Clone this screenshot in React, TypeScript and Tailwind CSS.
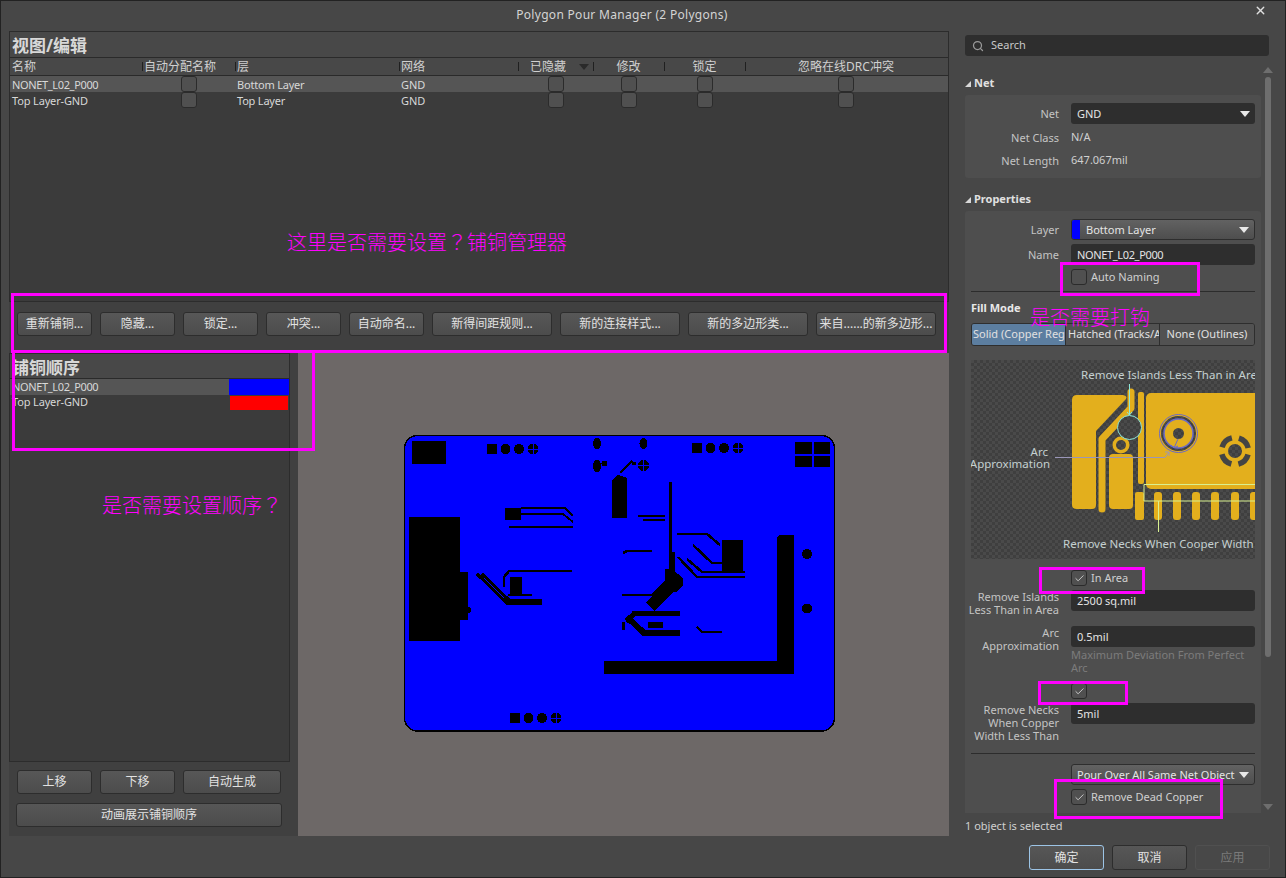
import { Check, Search, X } from 'lucide-react';
import type { ReactNode } from 'react';

const Caret = ({ className = '' }: { className?: string }) => (
  <svg width="10" height="6" viewBox="0 0 10 6" className={className}>
    <path d="M0 0H10L5 6Z" fill="currentColor" />
  </svg>
);

const Box = ({ checked }: { checked?: boolean }) => (
  <span className="flex h-[16px] w-[16px] shrink-0 items-center justify-center rounded-[3px] border border-[#2b2b2b] bg-[#505050] text-[#d0d0d0]">
    {checked && <Check size={11} strokeWidth={2} />}
  </span>
);

const Btn = ({ children, className = '' }: { children: ReactNode; className?: string }) => (
  <button className={`flex h-[24px] shrink-0 items-center justify-center whitespace-nowrap rounded-[3px] border border-[#2d2d2d] bg-gradient-to-b from-[#575757] to-[#4c4c4c] text-[12px] text-[#e2e2e2] ${className}`}>
    {children}
  </button>
);

const columns = 'grid grid-cols-[132px_93px_164px_119px_75px_71px_81px_202px]';

const GridHeadCell = ({ children, center, first }: { children?: ReactNode; center?: boolean; first?: boolean }) => (
  <div className={`relative flex h-full items-center px-[2px] ${center ? 'justify-center' : ''}`}>
    {!first && <span className="absolute left-0 top-[4px] h-[9px] w-px bg-[#202020]" />}
    {children}
  </div>
);

const rows = [
  { name: 'NONET_L02_P000', layer: 'Bottom Layer', selected: true },
  { name: 'Top Layer-GND', layer: 'Top Layer', selected: false },
];

const Cell = ({ children }: { children: ReactNode }) => <div className="flex items-center justify-center">{children}</div>;

const PolygonGrid = () => (
  <div className="h-[271px] shrink-0 border border-[#2c2c2c] bg-[#3b3b3b]">
    <div className="flex h-[26px] items-center border-b border-[#2a2a2a] bg-[#484848] px-[2px] pt-[2px] text-[17px] font-bold leading-none text-[#d8d8d8]">视图/编辑</div>
    <div className={`${columns} h-[18px] border-b border-[#2a2a2a] bg-[#484848] text-[12px] text-[#d0d0d0]`}>
      <GridHeadCell first>名称</GridHeadCell>
      <GridHeadCell>自动分配名称</GridHeadCell>
      <GridHeadCell>层</GridHeadCell>
      <GridHeadCell>网络</GridHeadCell>
      <GridHeadCell center>
        <span className="ml-[-15px]">已隐藏</span>
        <Caret className="absolute right-[4px] top-[6px] text-[#2a2a2a]" />
      </GridHeadCell>
      <GridHeadCell center>修改</GridHeadCell>
      <GridHeadCell center>锁定</GridHeadCell>
      <GridHeadCell center>忽略在线DRC冲突</GridHeadCell>
    </div>
    {rows.map(r => (
      <div key={r.name} className={`${columns} h-[16px] text-[11px] leading-none text-[#d8d8d8] ${r.selected ? 'bg-[#555555]' : ''}`}>
        <div className={`flex items-center px-[2px] ${r.selected ? 'tracking-[-0.35px]' : 'tracking-[-0.15px]'}`}>{r.name}</div>
        <Cell><Box /></Cell>
        <div className="flex items-center px-[2px] tracking-[-0.2px]">{r.layer}</div>
        <div className="flex items-center px-[2px]">GND</div>
        <Cell><Box /></Cell>
        <Cell><Box /></Cell>
        <Cell><Box /></Cell>
        <Cell><Box /></Cell>
      </div>
    ))}
  </div>
);

const CrossPad = ({ x, y }: { x: number; y: number }) => (
  <g>
    <circle cx={x} cy={y} r={5.5} fill="#000" />
    <path d={`M${x - 6} ${y}H${x + 6}M${x} ${y - 6}V${y + 6}`} stroke="#0000ff" strokeWidth="1" />
  </g>
);

const PadRow = ({ x, y }: { x: number; y: number }) => (
  <g fill="#000">
    <rect x={x} y={y} width="10" height="10" />
    <circle cx={x + 18.5} cy={y + 5} r="5" />
    <circle cx={x + 32} cy={y + 5} r="5" />
    <CrossPad x={x + 46} y={y + 5} />
  </g>
);

const tracks: [string, number][] = [
  ['M521 508H565L573 516', 2],
  ['M521 514H563L573 522', 2],
  ['M509 527H573', 2.5],
  ['M477 574L507 603H542', 3],
  ['M482 574L509 600H542', 3],
  ['M504 587V577L509 571H572', 2.5],
  ['M508 595H532', 2],
  ['M620 473L632 461', 2],
  ['M632 463H636', 3],
  ['M670 482V570', 3],
  ['M672 552V582', 6],
  ['M675 582L650 607', 12],
  ['M638 516H665', 2],
  ['M643 520H665', 2],
  ['M677 534H707L720 545', 2.5],
  ['M693 545L712 563H722', 2.5],
  ['M678 557L697 577H745', 2.5],
  ['M687 559L702 572H745', 2.5],
  ['M623 553L627 551H652', 2.5],
  ['M622 595H652L665 582', 2],
  ['M632 613.5H680', 5],
  ['M628 618L644 633H680', 6],
  ['M635 613L626 621', 5],
  ['M648 625H663', 6],
  ['M623 622V630', 3],
  ['M697 627L702 632H722', 2],
];

const BoardView = () => (
  <svg width="440" height="310" viewBox="400 425 440 310" className="block" shapeRendering="crispEdges">
    <rect x="404.5" y="435.5" width="430" height="295.5" rx="13" fill="#0000ff" stroke="#000" strokeWidth="1.5" />
    <g fill="#000">
      <rect x="412" y="441" width="34" height="23" />
      <rect x="409" y="517" width="51" height="124" />
      <rect x="460" y="572" width="8" height="48" />
      <rect x="505" y="508" width="16" height="12" />
      <rect x="510" y="577" width="12" height="17" />
      <path d="M612 518V480L618 475L627 478V518Z" />
      <rect x="722" y="540" width="21" height="32" />
      <path d="M604 661H777V537L780 535H794V674H604Z" />
      <path d="M665 569H672L683 578V585L676 592H666L665 585Z" />
      <path d="M795 442H812V454H795ZM813.5 442H830V454H813.5ZM795 455.5H812V467H795ZM813.5 455.5H830V467H813.5Z" />
      <ellipse cx="597" cy="443.5" rx="4" ry="5.5" />
      <ellipse cx="597" cy="466" rx="4" ry="6" />
      <circle cx="604.5" cy="463.5" r="3" />
      <ellipse cx="643.5" cy="443.5" rx="4" ry="5.5" />
      <circle cx="807" cy="554" r="5" />
      <circle cx="807" cy="608.5" r="5" />
      <circle cx="468" cy="610" r="3" />
    </g>
    <PadRow x={487} y={444} />
    <PadRow x={692} y={443} />
    <PadRow x={510} y={713} />
    <CrossPad x={643.5} y={465.5} />
    <g fill="none" stroke="#000">
      {tracks.map(([d, w]) => <path key={d} d={d} strokeWidth={w} />)}
    </g>
  </svg>
);

const Illustration = () => (
  <div className="h-[199px] w-[284px] shrink-0 bg-[repeating-conic-gradient(#3f3f3f_0_25%,#4a4a4a_0_50%)] bg-[length:6px_6px]">
    <svg width="284" height="199" viewBox="971 360 284 199" className="block">
      <defs>
        <pattern id="chk" x="971" y="360" width="6" height="6" patternUnits="userSpaceOnUse">
          <rect width="6" height="6" fill="#4a4a4a" />
          <rect width="3" height="3" fill="#3f3f3f" />
          <rect x="3" y="3" width="3" height="3" fill="#3f3f3f" />
        </pattern>
      </defs>
      <g fill="#e3af1d">
        <path d="M1072 400Q1072 395 1077 395H1123Q1128 396 1126 399L1096 431V505Q1096 509 1092 509H1077Q1072 509 1072 505Z" />
        <path d="M1102 509V439L1131 408V392" fill="none" stroke="#e3af1d" strokeWidth="7" strokeLinecap="round" strokeLinejoin="round" />
        <path d="M1109 458Q1109 454 1113 454H1129Q1133 454 1133 458V505Q1133 509 1129 509H1113Q1109 509 1109 505Z" />
        <rect x="1138" y="392" width="6" height="92" rx="2" />
        <rect x="1135" y="492" width="9" height="28" rx="2" />
        <rect x="1146" y="393" width="120" height="96" rx="5" />
        <circle cx="1121" cy="445" r="8.5" />
        {[1154, 1173, 1192, 1211, 1231, 1250].map(x => <rect key={x} x={x} y="492" width="8" height="28" rx="3" />)}
      </g>
      <circle cx="1121" cy="445" r="5" fill="url(#chk)" />
      <circle cx="1178.5" cy="433.5" r="19" fill="#e3af1d" stroke="#6a6ac8" strokeWidth="1" />
      <circle cx="1178.5" cy="433.5" r="17.5" fill="url(#chk)" />
      <circle cx="1178.5" cy="433.5" r="14.5" fill="#e3af1d" stroke="#6a6ac8" strokeWidth="1.5" />
      <circle cx="1178.5" cy="433.5" r="5.5" fill="url(#chk)" />
      <path d="M1178 439L1174 448M1171 445L1174 448L1178 446" fill="none" stroke="#6a6ac8" strokeWidth="1" />
      <circle cx="1235" cy="451" r="13.5" fill="none" stroke="#444" strokeWidth="5.5" strokeDasharray="14 7.2" strokeDashoffset="-3.6" />
      <circle cx="1235" cy="451" r="7" fill="url(#chk)" />
      <circle cx="1129.5" cy="427.5" r="12" fill="url(#chk)" stroke="#8ee8d8" strokeWidth="1" />
      <path d="M1129.5 384V415M1127 412L1129.5 415L1132 412" fill="none" stroke="#8ee8d8" strokeWidth="1" />
      <path d="M1055 457.5H1165L1169 452M1165 452H1169V456" fill="none" stroke="#9a96b8" strokeWidth="1" />
      <path d="M1255 484.5H1144V501H1255M1158.5 501V532" fill="none" stroke="#d8f090" strokeWidth="1" />
      <g fill="#c4d0d0" fontSize="11.5">
        <text x="1081" y="379">Remove Islands Less Than in Area</text>
        <text x="1048" y="456" textAnchor="end">Arc</text>
        <text x="1050" y="468" textAnchor="end">Approximation</text>
        <text x="1063" y="548">Remove Necks When Cooper Width</text>
      </g>
    </svg>
  </div>
);

const Label = ({ children }: { children: ReactNode }) => (
  <div className="w-[94px] shrink-0 text-right text-[11px] leading-[13px] text-[#c4c4c4]">{children}</div>
);

const Input = ({ value, className = '' }: { value: string; className?: string }) => (
  <div className={`flex h-[21px] w-[184px] items-center rounded-[3px] bg-[#2e2e2e] px-[6px] pt-[1px] text-[11px] text-[#e4e4e4] ${className}`}>{value}</div>
);

const TallRow = ({ label, children, className = '' }: { label: ReactNode; children: ReactNode; className?: string }) => (
  <div className={`flex items-start gap-[12px] ${className}`}>
    <Label>{label}</Label>
    <div>{children}</div>
  </div>
);

const CheckRow = ({ label, checked, className = '' }: { label?: string; checked?: boolean; className?: string }) => (
  <div className={`ml-[106px] flex h-[16px] items-center gap-[4px] text-[11px] text-[#d0d0d0] ${className}`}>
    <Box checked={checked} />
    {label}
  </div>
);

const SectionTitle = ({ children }: { children: ReactNode }) => (
  <div className="flex h-[20px] items-center gap-[3px] pb-[3px] text-[11px] font-bold text-[#e0e0e0]">
    <svg width="6" height="6" viewBox="0 0 6 6" className="mt-[1px]"><path d="M0 6H6V0Z" fill="#d8d8d8" /></svg>
    {children}
  </div>
);

const toolbar: [string, string][] = [
  ['重新铺铜...', 'w-[75px]'],
  ['隐藏...', 'w-[75px]'],
  ['锁定...', 'w-[75px]'],
  ['冲突...', 'w-[75px]'],
  ['自动命名...', 'w-[75px]'],
  ['新得间距规则...', 'w-[120px]'],
  ['新的连接样式...', 'w-[120px]'],
  ['新的多边形类...', 'w-[120px]'],
  ['来自......的新多边形...', 'w-[120px]'],
];

const Annotation = ({ className }: { className: string }) => (
  <div className={`pointer-events-none absolute border-[3px] border-[#ff00ff] ${className}`} />
);

const Note = ({ className, children }: { className: string; children: ReactNode }) => (
  <div className={`pointer-events-none absolute whitespace-nowrap font-['Noto_Sans_CJK_TC','Noto_Sans_CJK_SC',sans-serif] text-[20px] font-light leading-none text-[#ff00ff] ${className}`}>{children}</div>
);

export default function App() {
  return (
    <div className="relative flex h-[878px] w-[1286px] flex-col overflow-hidden bg-[#474747] font-['Noto_Sans','Noto_Sans_CJK_SC',sans-serif] shadow-[inset_0_0_0_1px_#222222]">
      {/* title bar */}
      <div className="relative flex h-[31px] shrink-0 items-center justify-center text-[12px] tracking-[0.3px] text-[#d4d4d4]">
        <span className="mr-[42px] mt-[-1px]">Polygon Pour Manager (2 Polygons)</span>
        <X size={13} strokeWidth={2.5} className="absolute right-[19px] top-[4px] text-[#e0e0e0]" />
      </div>

      <div className="flex h-[805px] shrink-0">
        {/* left side */}
        <div className="ml-[9px] flex w-[940px] shrink-0 flex-col">
          <PolygonGrid />
          <div className="flex h-[51px] shrink-0 items-start gap-[8px] bg-[#404040] pl-[8px] pt-[10px]">
            {toolbar.map(([text, w]) => <Btn key={text} className={w}>{text}</Btn>)}
          </div>
          <div className="flex min-h-0 flex-1">
            <div className="flex w-[289px] shrink-0 flex-col bg-[#404040]">
              <div className="h-[409px] w-[281px] shrink-0 border border-[#2c2c2c] bg-[#3b3b3b]">
                <div className="flex h-[25px] items-center border-b border-[#2a2a2a] bg-[#484848] px-[2px] pt-[2px] text-[17px] font-bold leading-none text-[#d8d8d8]">铺铜顺序</div>
                <div className="flex h-[16px] bg-[#555555] text-[11px] text-[#d8d8d8]">
                  <div className="flex flex-1 items-center px-[2px] tracking-[-0.35px]">NONET_L02_P000</div>
                  <div className="w-[60px] bg-[#0000ff]" />
                </div>
                <div className="flex h-[15px] text-[11px] text-[#d8d8d8]">
                  <div className="flex flex-1 items-center px-[2px] tracking-[-0.15px]">Top Layer-GND</div>
                  <div className="mr-[1px] mt-[1px] w-[58px] bg-[#ff0000]" />
                </div>
              </div>
              <div className="ml-[8px] mt-[8px] flex gap-[8px]">
                <Btn className="w-[75px]">上移</Btn>
                <Btn className="w-[75px]">下移</Btn>
                <Btn className="w-[98px]">自动生成</Btn>
              </div>
              <Btn className="ml-[7px] mt-[9px] w-[266px]">动画展示铺铜顺序</Btn>
            </div>
            <div className="flex-1 bg-[#6d6867] pl-[102px] pt-[72px]">
              <BoardView />
            </div>
          </div>
        </div>

        {/* right side */}
        <div className="ml-[16px] flex w-[310px] shrink-0 flex-col">
          <div className="mt-[4px] flex h-[21px] w-[304px] shrink-0 items-center gap-[7px] rounded-[3px] bg-[#2e2e2e] px-[7px] text-[11px] text-[#c8c8c8]">
            <Search size={12} strokeWidth={2.5} className="text-[#9a9a9a]" />
            Search
          </div>
          <div className="mt-[9px] flex h-[748px] shrink-0 gap-[4px] overflow-hidden">
            <div className="w-[296px] shrink-0">
              <div className="mt-[10px]"><SectionTitle>Net</SectionTitle></div>
              <div className="h-[83px] rounded-[3px] bg-[#4e4e4e] pt-[8px]">
                <div className="flex items-center gap-[12px]">
                  <Label>Net</Label>
                  <div className="flex h-[21px] w-[184px] items-center justify-between rounded-[3px] bg-[#2e2e2e] pl-[6px] pr-[5px] pt-[1px] text-[11px] text-[#e4e4e4]">
                    GND
                    <Caret className="text-[#e8e8e8]" />
                  </div>
                </div>
                <div className="mt-[2px] flex h-[23px] items-center gap-[12px]">
                  <Label>Net Class</Label>
                  <span className="text-[11px] text-[#d0d0d0]">N/A</span>
                </div>
                <div className="flex h-[23px] items-center gap-[12px]">
                  <Label>Net Length</Label>
                  <span className="text-[11px] text-[#d0d0d0]">647.067mil</span>
                </div>
              </div>
              <div className="mt-[13px]"><SectionTitle>Properties</SectionTitle></div>
              <div className="h-[620px] rounded-[3px] bg-[#4e4e4e] pt-[8px]">
                <div className="flex items-center gap-[12px]">
                  <Label>Layer</Label>
                  <div className="flex h-[21px] w-[184px] items-center justify-between overflow-hidden rounded-[3px] border border-[#2e2e2e] bg-gradient-to-b from-[#626262] to-[#4e4e4e] pr-[5px] text-[11px] text-[#e4e4e4]">
                    <span className="flex h-full items-center">
                      <span className="mr-[6px] h-full w-[8px] bg-[#0000ff]" />
                      <span className="pt-[1px]">Bottom Layer</span>
                    </span>
                    <Caret className="text-[#e8e8e8]" />
                  </div>
                </div>
                <div className="mt-[4px] flex items-center gap-[12px]">
                  <Label>Name</Label>
                  <Input value="NONET_L02_P000" className="tracking-[-0.35px]" />
                </div>
                <CheckRow label="Auto Naming" className="mt-[4px]" />
                <div className="mx-[6px] mt-[6px] h-px bg-[#2c2c2c]" />
                <div className="ml-[6px] mt-[8px] flex h-[16px] items-center text-[11px] font-bold text-[#e8e8e8]">Fill Mode</div>
                <div className="ml-[6px] mt-[7px] flex h-[23px] w-[284px] overflow-hidden rounded-[3px] border border-[#2e2e2e] text-[11px] text-[#e0e0e0]">
                  <div className="flex w-[94px] shrink-0 items-center overflow-hidden whitespace-nowrap border-r border-[#2e2e2e] bg-[#5c7ea0] pl-[1px]">Solid (Copper Regions)</div>
                  <div className="flex w-[94px] shrink-0 items-center overflow-hidden whitespace-nowrap border-r border-[#2e2e2e] bg-[#525252] pl-[2px]">Hatched (Tracks/Arcs)</div>
                  <div className="flex flex-1 items-center justify-center whitespace-nowrap bg-[#525252]">None (Outlines)</div>
                </div>
                <div className="ml-[6px] mt-[14px]"><Illustration /></div>
                <CheckRow label="In Area" checked className="mt-[11px]" />
                <TallRow label={<>Remove Islands<br />Less Than in Area</>} className="mt-[4px] h-[36px]">
                  <Input value="2500 sq.mil" />
                </TallRow>
                <TallRow label={<>Arc<br />Approximation</>} className="h-[57px]">
                  <Input value="0.5mil" />
                  <div className="mt-[1px] w-[184px] text-[11px] leading-[13px] text-[#7c7c7c]">Maximum Deviation From Perfect Arc</div>
                </TallRow>
                <CheckRow checked />
                <TallRow label={<>Remove Necks<br />When Copper<br />Width Less Than</>} className="mt-[4px] h-[50px]">
                  <Input value="5mil" />
                </TallRow>
                <div className="mx-[6px] h-px bg-[#2c2c2c]" />
                <div className="ml-[106px] mt-[10px] flex h-[21px] w-[184px] items-center justify-between overflow-hidden whitespace-nowrap rounded-[3px] border border-[#2e2e2e] bg-gradient-to-b from-[#626262] to-[#4e4e4e] pl-[5px] pr-[5px] text-[11px] text-[#e4e4e4]">
                  <span className="pt-[1px]">Pour Over All Same Net Object</span>
                  <Caret className="shrink-0 text-[#e8e8e8]" />
                </div>
                <CheckRow label="Remove Dead Copper" checked className="mt-[4px]" />
              </div>
            </div>
            <div className="flex w-[6px] shrink-0 flex-col items-center text-[#6e6e6e]">
              <Caret className="mt-[2px] rotate-180" />
              <div className="mt-[4px] h-[580px] w-[6px] shrink-0 rounded-[3px] bg-[#6e6e6e]" />
              <Caret className="mb-[3px] mt-auto" />
            </div>
          </div>
          <div className="mt-[5px] text-[11px] text-[#d0d0d0]">1 object is selected</div>
        </div>
      </div>

      {/* footer */}
      <div className="flex flex-1 items-start justify-end gap-[8px] pr-[16px] pt-[9px]">
        <Btn className="h-[25px] w-[75px] border-[#9cc4e6]">确定</Btn>
        <Btn className="h-[25px] w-[75px]">取消</Btn>
        <button className="h-[25px] w-[75px] rounded-[3px] border border-[#505050] bg-[#484848] text-[12px] text-[#7a7a7a]">应用</button>
      </div>

      {/* annotations drawn on top of the screenshot */}
      <Annotation className="left-[11px] top-[293px] h-[60px] w-[936px]" />
      <Annotation className="left-[12px] top-[350px] h-[101px] w-[303px]" />
      <Annotation className="left-[1060px] top-[262px] h-[34px] w-[140px]" />
      <Annotation className="left-[1039px] top-[567px] h-[27px] w-[106px]" />
      <Annotation className="left-[1038px] top-[681px] h-[24px] w-[90px]" />
      <Annotation className="left-[1054px] top-[779px] h-[40px] w-[169px]" />
      <Note className="left-[287px] top-[232px]">这里是否需要设置？铺铜管理器</Note>
      <Note className="left-[102px] top-[495px]">是否需要设置顺序？</Note>
      <Note className="left-[1030px] top-[307px]">是否需要打钩</Note>
    </div>
  );
}
